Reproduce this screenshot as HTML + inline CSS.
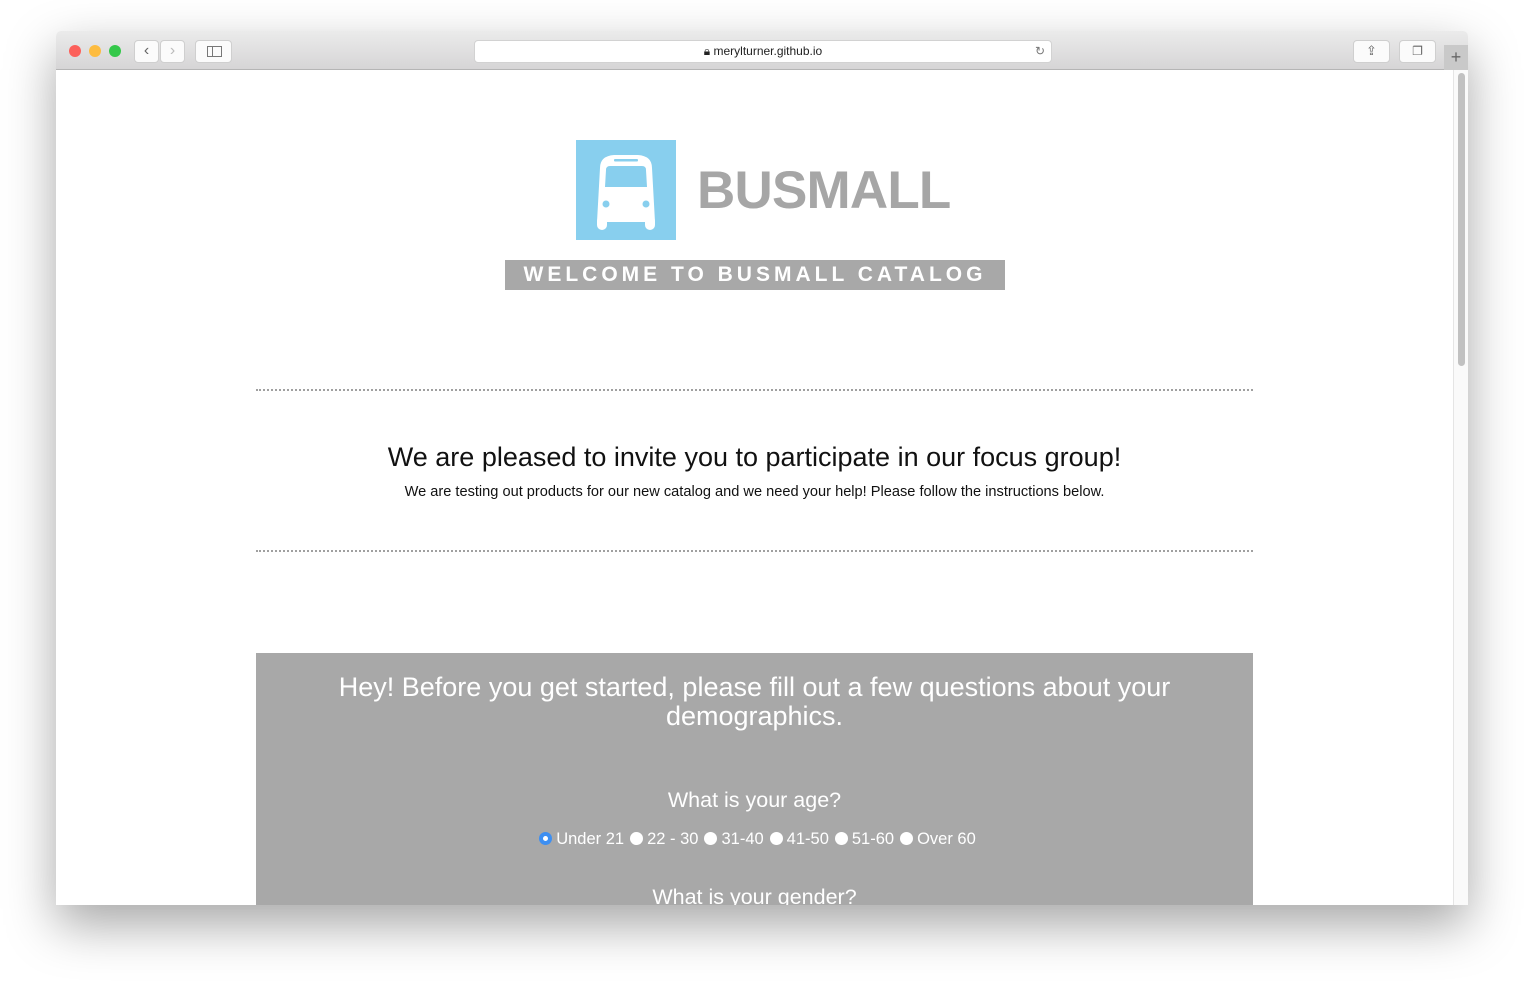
<!DOCTYPE html>
<html><head><style>
*{box-sizing:border-box;margin:0;padding:0}
body{width:1524px;height:985px;background:#fff;position:relative;overflow:hidden;font-family:"Liberation Sans",sans-serif}
.win{position:absolute;left:56px;top:31px;width:1412px;height:874px;background:#fff;box-shadow:0 20px 50px rgba(0,0,0,.35);border-radius:5px 5px 0 0;overflow:hidden}
.bar{position:absolute;left:0;top:0;width:100%;height:39px;background:linear-gradient(#ebebeb,#d6d5d6);border-bottom:1px solid #b5b5b5}
.dot{position:absolute;top:14px;width:12px;height:12px;border-radius:50%}
.btn{position:absolute;top:9px;height:23px;background:#fbfbfb;border:1px solid #cfcfcf;border-radius:4px}
.url{position:absolute;left:418px;top:9px;width:578px;height:23px;background:#fff;border:1px solid #d2d2d2;border-radius:4px;font-size:12px;text-align:center;line-height:21px;color:#222}
.content{position:absolute;left:0;top:39px;width:1397px;height:835px;background:#fff}
.sb{position:absolute;left:1397px;top:39px;width:15px;height:835px;background:#fafafa;border-left:1px solid #e5e5e5}
.thumb{position:absolute;left:4px;top:3px;width:7px;height:293px;background:#c1c1c1;border-radius:4px}
.hr{position:absolute;left:200px;width:997px;border-top:2px dotted #a0a0a0}
.gray{position:absolute;left:200px;top:583px;width:997px;height:260px;background:#a8a8a8;color:#fff;text-align:center}
.r{display:inline-block;width:13px;height:13px;border-radius:50%;background:#fff;vertical-align:-1px;margin:0 4px 0 6px}
</style></head><body>
<div class="win">
<div class="bar">
<div class="dot" style="left:13px;background:#fc605b"></div>
<div class="dot" style="left:33px;background:#fdbc40"></div>
<div class="dot" style="left:53px;background:#34c84a"></div>
<div class="btn" style="left:78px;width:25px;font-size:16px;color:#666;text-align:center;line-height:20px">‹</div>
<div class="btn" style="left:104px;width:25px;font-size:16px;color:#bbb;text-align:center;line-height:20px">›</div>
<div class="btn" style="left:139px;width:37px"><div style="position:absolute;left:11px;top:5px;width:15px;height:11px;border:1px solid #777"><div style="position:absolute;left:4px;top:0;height:9px;border-left:1px solid #777"></div></div></div>
<div class="url">🔒︎ merylturner.github.io<span style="position:absolute;right:6px;color:#777">↻</span></div>
<div class="btn" style="left:1297px;width:37px;text-align:center;color:#666;font-size:13px;line-height:20px">⇪</div>
<div class="btn" style="left:1343px;width:37px;text-align:center;color:#666;font-size:12px;line-height:20px">❐</div>
<div style="position:absolute;left:1388px;top:14px;width:24px;height:25px;background:#c9c9c9;color:#666;font-size:18px;text-align:center;line-height:24px">+</div>
</div>
<div class="content">
<div style="position:absolute;left:520px;top:70px;width:100px;height:100px;background:#88cfee">
<svg width="100" height="100" viewBox="0 0 100 100"><g fill="#fff"><path d="M24 28 Q24 16 38 15 L62 15 Q76 16 76 28 L79 82 L21 82 Z"/><rect x="21" y="76" width="10" height="14" rx="5"/><rect x="69" y="76" width="10" height="14" rx="5"/></g><path d="M30 30 Q30 26 34 26 L66 26 Q70 26 70 30 L71 47 L29 47 Z" fill="#88cfee"/><rect x="38" y="19" width="24" height="2.5" rx="1" fill="#88cfee"/><circle cx="30" cy="64" r="3.5" fill="#88cfee"/><circle cx="70" cy="64" r="3.5" fill="#88cfee"/></svg>
</div>
<div style="position:absolute;left:641px;top:91px;font-size:53px;line-height:60px;font-weight:bold;color:#a6a6a6;letter-spacing:-0.8px">BUSMALL</div>
<div style="position:absolute;left:449px;top:190px;width:500px;height:30px;background:#a8a8a8;color:#fff;font-weight:bold;font-size:21px;letter-spacing:4px;text-align:center;line-height:30px;white-space:nowrap">WELCOME TO BUSMALL CATALOG</div>
<div class="hr" style="top:319px"></div>
<div style="position:absolute;left:200px;top:372px;width:997px;text-align:center;font-size:27px;color:#111">We are pleased to invite you to participate in our focus group!</div>
<div style="position:absolute;left:200px;top:414px;width:997px;text-align:center;font-size:14.6px;color:#111">We are testing out products for our new catalog and we need your help! Please follow the instructions below.</div>
<div class="hr" style="top:480px"></div>
<div class="gray">
<div style="padding:20px 60px 0;font-size:27px;line-height:29px">Hey! Before you get started, please fill out a few questions about your demographics.</div>
<div style="margin-top:57px;font-size:21.5px">What is your age?</div>
<div style="margin-top:17px;font-size:16.5px"><span class="r" style="background:#fff;border:4px solid #3d8ff2"></span>Under 21<span class="r"></span>22 - 30<span class="r"></span>31-40<span class="r"></span>41-50<span class="r"></span>51-60<span class="r"></span>Over 60</div>
<div style="margin-top:36px;font-size:21.5px">What is your gender?</div>
</div>
</div>
<div class="sb"><div class="thumb"></div></div>
</div>
</body></html>
